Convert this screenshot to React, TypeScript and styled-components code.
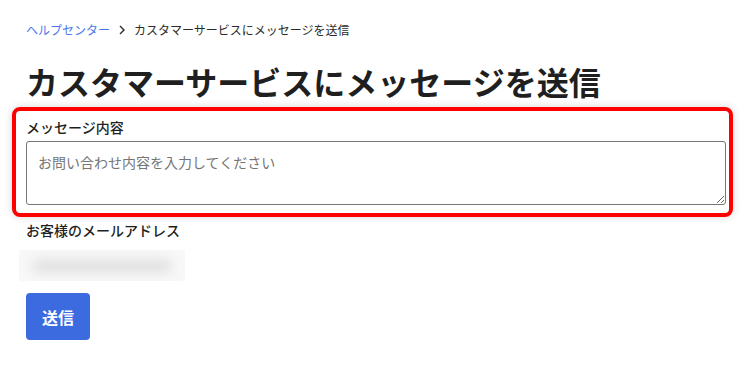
import React from "react";
import styled, { createGlobalStyle } from "styled-components";

const GlobalStyle = createGlobalStyle`
  body {
    margin: 0;
    background: #ffffff;
    font-family: "Noto Sans CJK JP", "Noto Sans", sans-serif;
    color: #1f1f1f;
  }
`;

const Page = styled.div`
  width: 700px;
  padding: 21px 26px 0;
`;

const Breadcrumb = styled.nav`
  display: flex;
  align-items: center;
  gap: 8px;
  font-size: 12px;
  line-height: 18px;
  color: #2b2b2b;
`;

const Crumb = styled.a`
  color: #4a78ec;
  text-decoration: none;
`;

const Title = styled.h1`
  margin: 22px 0 0;
  font-size: 32px;
  line-height: 40px;
  font-weight: 700;
  color: #1f1f1f;
`;

const Highlight = styled.div`
  margin: 6px -7px 0 -14px;
  padding: 6px 3px 8px 10px;
  border: 4px solid #ff0000;
  border-radius: 8px;
  box-shadow: 0 0 8px rgba(0, 0, 0, 0.16);
`;

const Label = styled.label<{ $gap?: number }>`
  display: block;
  margin-top: ${(p) => p.$gap ?? 0}px;
  font-size: 14px;
  line-height: 20px;
  font-weight: 500;
  color: #1f1f1f;
`;

const TextArea = styled.textarea`
  display: block;
  box-sizing: border-box;
  width: 700px;
  height: 64px;
  margin-top: 4px;
  padding: 10px 11px;
  border: 1px solid #767676;
  border-radius: 3px;
  font-family: inherit;
  font-size: 14px;
  line-height: 20px;
  color: #1f1f1f;
  resize: vertical;
  &::placeholder {
    color: #757575;
  }
`;

const BlurBox = styled.div`
  margin: 10px 0 0 -7px;
  width: 166px;
  height: 31px;
  background: #f8f8f8;
  overflow: hidden;
  display: flex;
  align-items: center;
  justify-content: center;
`;

const BlurFill = styled.div`
  width: 140px;
  height: 12px;
  background: #dedede;
  border-radius: 6px;
  filter: blur(6px);
`;

const SubmitButton = styled.button`
  margin-top: 12px;
  width: 64px;
  height: 47px;
  border: none;
  border-radius: 4px;
  background: #3c6be0;
  color: #ffffff;
  font-family: inherit;
  font-size: 16px;
  font-weight: 700;
  cursor: pointer;
`;

const Chevron = () => (
  <svg width="8" height="10" viewBox="0 0 8 10">
    <path d="M2 1 L6 5 L2 9" fill="none" stroke="#2b2b2b" strokeWidth="1.4" />
  </svg>
);

const App: React.FC = () => {
  return (
    <>
      <GlobalStyle />
      <Page>
        <Breadcrumb>
          <Crumb href="#">ヘルプセンター</Crumb>
          <Chevron />
          <span>カスタマーサービスにメッセージを送信</span>
        </Breadcrumb>
        <Title>カスタマーサービスにメッセージを送信</Title>
        <Highlight>
          <Label htmlFor="message">メッセージ内容</Label>
          <TextArea id="message" placeholder="お問い合わせ内容を入力してください" />
        </Highlight>
        <Label $gap={3}>お客様のメールアドレス</Label>
        <BlurBox>
          <BlurFill />
        </BlurBox>
        <SubmitButton>送信</SubmitButton>
      </Page>
    </>
  );
};

export default App;
